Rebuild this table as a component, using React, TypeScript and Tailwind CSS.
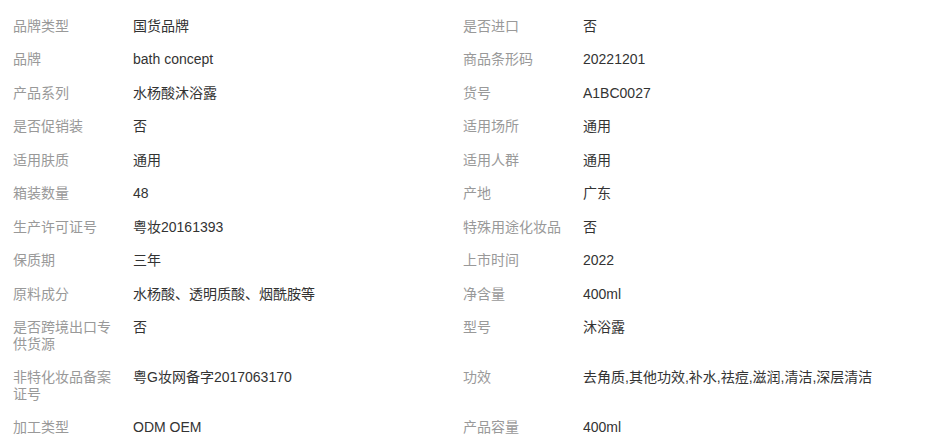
import React from 'react';

type Attr = { label: string; value: string };

const attrs: Attr[] = [
  { label: '品牌类型', value: '国货品牌' },
  { label: '是否进口', value: '否' },
  { label: '品牌', value: 'bath concept' },
  { label: '商品条形码', value: '20221201' },
  { label: '产品系列', value: '水杨酸沐浴露' },
  { label: '货号', value: 'A1BC0027' },
  { label: '是否促销装', value: '否' },
  { label: '适用场所', value: '通用' },
  { label: '适用肤质', value: '通用' },
  { label: '适用人群', value: '通用' },
  { label: '箱装数量', value: '48' },
  { label: '产地', value: '广东' },
  { label: '生产许可证号', value: '粤妆20161393' },
  { label: '特殊用途化妆品', value: '否' },
  { label: '保质期', value: '三年' },
  { label: '上市时间', value: '2022' },
  { label: '原料成分', value: '水杨酸、透明质酸、烟酰胺等' },
  { label: '净含量', value: '400ml' },
  { label: '是否跨境出口专供货源', value: '否' },
  { label: '型号', value: '沐浴露' },
  { label: '非特化妆品备案证号', value: '粤G妆网备字2017063170' },
  { label: '功效', value: '去角质,其他功效,补水,祛痘,滋润,清洁,深层清洁' },
  { label: '加工类型', value: 'ODM OEM' },
  { label: '产品容量', value: '400ml' }
];

export default function App() {
  return (
    <div
      className="bg-white pt-[9px] pl-[13px] pr-[14px] text-[14px] leading-[16.5px]"
      style={{ fontFamily: '"Liberation Sans", Arial, "Noto Sans CJK SC", sans-serif' }}
    >
      <div className="grid grid-cols-[450px_450px]">
        {attrs.map((a, i) => (
          <div key={i} className="flex py-[8.5px]">
            <div className="w-[120px] shrink-0 pr-[20px] text-[#999999]">{a.label}</div>
            <div className="flex-1 text-[#333333]">{a.value}</div>
          </div>
        ))}
      </div>
    </div>
  );
}
